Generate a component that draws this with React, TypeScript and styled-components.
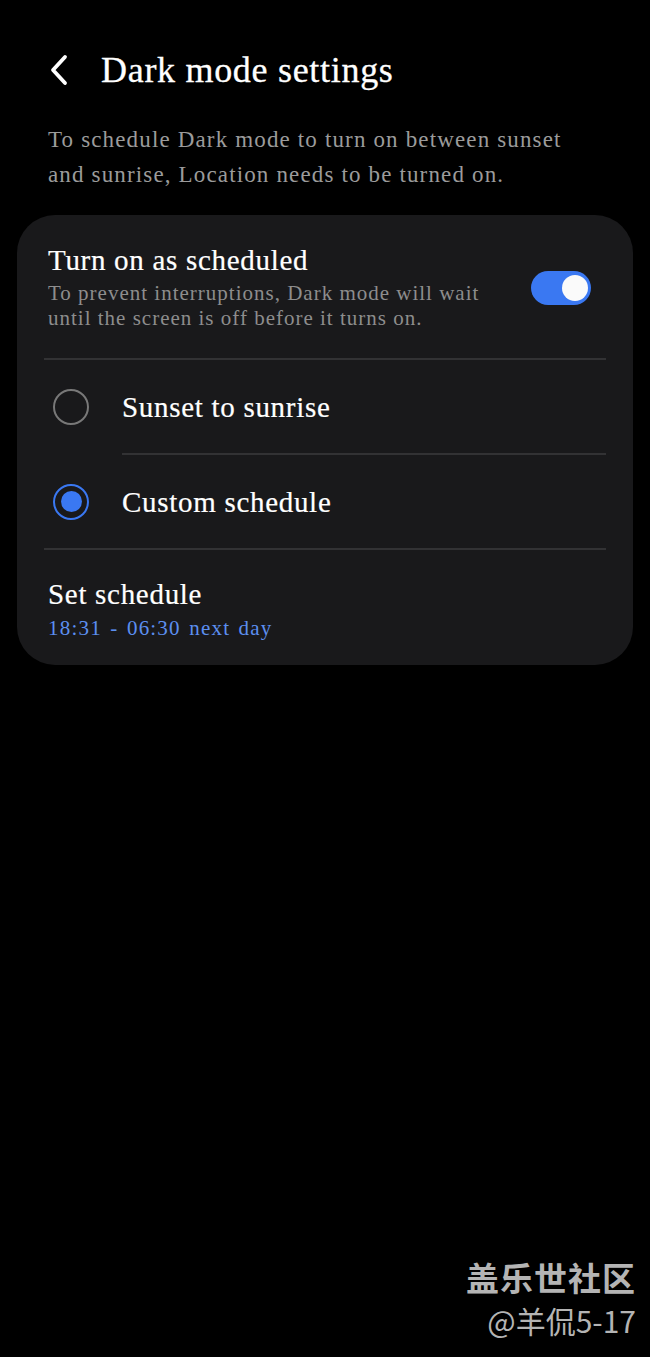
import React from "react";
import styled, { createGlobalStyle } from "styled-components";

const Global = createGlobalStyle`
  html, body { margin: 0; padding: 0; background: #000; }
  body { font-family: "Liberation Serif", "DejaVu Serif", serif; color: #fff; }
`;

const Page = styled.div`
  width: 650px;
  height: 1357px;
  background: #000;
  display: flex;
  flex-direction: column;
  position: relative;
  overflow: hidden;
`;

const Header = styled.div`
  display: flex;
  align-items: center;
  height: 70px;
  margin-top: 35px;
  padding-left: 46px;
  gap: 29px;
`;

const Title = styled.h1`
  margin: 0;
  font-size: 36px;
  font-weight: 400;
  color: #fff;
  letter-spacing: 0.7px;
  -webkit-text-stroke: 0.3px #fff;
`;

const Desc = styled.p`
  margin: 17px 0 0;
  padding: 0 80px 0 48px;
  font-size: 23px;
  line-height: 35px;
  color: #9b9b9b;
  letter-spacing: 1.15px;
`;

const Card = styled.div`
  margin: 23px 17px 0;
  background: #19191b;
  border-radius: 38px;
  padding: 0 27px;
  display: flex;
  flex-direction: column;
`;

const ToggleRow = styled.div`
  display: flex;
  align-items: center;
  justify-content: space-between;
  padding: 28px 15px 27px 4px;
`;

const TextCol = styled.div`
  display: flex;
  flex-direction: column;
  max-width: 470px;
`;

const Primary = styled.div`
  font-size: 29px;
  line-height: 34px;
  color: #fff;
  letter-spacing: 0.7px;
  -webkit-text-stroke: 0.2px #fff;
`;

const Secondary = styled.div<{ $blue?: boolean }>`
  font-size: 21px;
  line-height: 25px;
  margin-top: ${(p) => (p.$blue ? "5px" : "4px")};
  color: ${(p) => (p.$blue ? "#5c8ff0" : "#8d8d8d")};
  letter-spacing: ${(p) => (p.$blue ? "1.2px" : "1px")};
  word-spacing: ${(p) => (p.$blue ? "2px" : "0")};
`;

const Switch = styled.div`
  width: 60px;
  height: 34px;
  border-radius: 17px;
  background: #3a78f2;
  display: flex;
  align-items: center;
  justify-content: flex-end;
  padding: 0 3px;
  box-sizing: border-box;
  flex-shrink: 0;
  margin-top: 2px;
`;

const Knob = styled.div`
  width: 26px;
  height: 26px;
  border-radius: 50%;
  background: #fafafa;
`;

const Divider = styled.div<{ $inset?: number }>`
  height: 2px;
  background: #323234;
  margin-left: ${(p) => p.$inset ?? 0}px;
`;

const RadioRow = styled.div`
  display: flex;
  align-items: center;
  height: 93px;
  padding-left: 9px;
  gap: 33px;
`;

const Radio = styled.div<{ $on?: boolean }>`
  width: 36px;
  height: 36px;
  border-radius: 50%;
  box-sizing: border-box;
  border: 2.5px solid ${(p) => (p.$on ? "#3a78f2" : "#787878")};
  display: flex;
  align-items: center;
  justify-content: center;
  flex-shrink: 0;
`;

const Dot = styled.div`
  width: 21px;
  height: 21px;
  border-radius: 50%;
  background: #3a78f2;
`;

const ScheduleRow = styled.div`
  padding: 27px 4px 24px;
  display: flex;
  flex-direction: column;
`;

const Watermark = styled.div`
  position: absolute;
  right: 14px;
  bottom: 20px;
  display: flex;
  flex-direction: column;
  align-items: flex-end;
  gap: 9px;
  font-family: "Noto Sans CJK SC", sans-serif;
  color: #b4b4b4;
`;

const WmTop = styled.div`
  font-size: 33px;
  font-weight: 700;
  line-height: 34px;
  letter-spacing: 1px;
`;

const WmBottom = styled.div`
  font-size: 30px;
  line-height: 34px;
  font-weight: 400;
`;

const BackIcon = () => (
  <svg width="26" height="34" viewBox="0 0 26 34">
    <path d="M19 4 L7 17 L19 30" fill="none" stroke="#fff" strokeWidth="3.8" strokeLinecap="round" strokeLinejoin="round" />
  </svg>
);

export default function App() {
  return (
    <Page>
      <Global />
      <Header>
        <BackIcon />
        <Title>Dark mode settings</Title>
      </Header>
      <Desc>
        To schedule Dark mode to turn on between sunset and sunrise, Location needs to be turned on.
      </Desc>
      <Card>
        <ToggleRow>
          <TextCol>
            <Primary>Turn on as scheduled</Primary>
            <Secondary>To prevent interruptions, Dark mode will wait until the screen is off before it turns on.</Secondary>
          </TextCol>
          <Switch><Knob /></Switch>
        </ToggleRow>
        <Divider />
        <RadioRow>
          <Radio />
          <Primary>Sunset to sunrise</Primary>
        </RadioRow>
        <Divider $inset={78} />
        <RadioRow>
          <Radio $on><Dot /></Radio>
          <Primary>Custom schedule</Primary>
        </RadioRow>
        <Divider />
        <ScheduleRow>
          <Primary>Set schedule</Primary>
          <Secondary $blue>18:31 - 06:30 next day</Secondary>
        </ScheduleRow>
      </Card>
      <Watermark>
        <WmTop>盖乐世社区</WmTop>
        <WmBottom>@羊侃5-17</WmBottom>
      </Watermark>
    </Page>
  );
}
